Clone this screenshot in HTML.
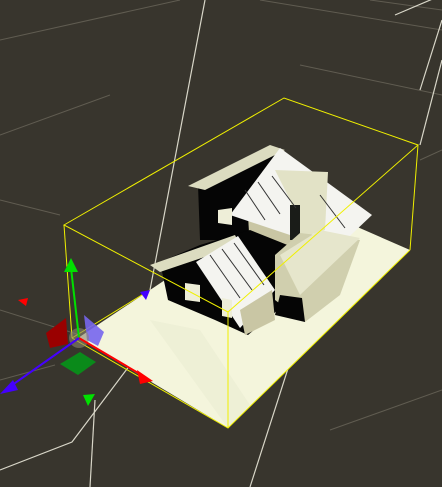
<!DOCTYPE html>
<html><head><style>html,body{margin:0;padding:0;background:#38352d;overflow:hidden}svg{display:block}</style></head>
<body>
<svg width="442" height="487" viewBox="0 0 442 487" xmlns="http://www.w3.org/2000/svg">
<rect width="442" height="487" fill="#38352d"/>
<g stroke="#6a665a" stroke-width="1" fill="none" opacity="0.8">
<line x1="0" y1="40" x2="180" y2="0"/>
<line x1="0" y1="135" x2="110" y2="95"/>
<line x1="260" y1="0" x2="442" y2="30"/>
<line x1="300" y1="65" x2="442" y2="95"/>
<line x1="0" y1="200" x2="60" y2="215"/>
<line x1="0" y1="310" x2="80" y2="335"/>
<line x1="0" y1="380" x2="55" y2="365"/>
<line x1="370" y1="0" x2="442" y2="10"/>
<line x1="420" y1="160" x2="442" y2="150"/>
<line x1="330" y1="430" x2="442" y2="390"/>
</g>
<g stroke="#d8d6c8" stroke-width="1.2" fill="none">
<polyline points="205,0 150,290 130,365 72,442 0,470"/>
<line x1="395" y1="15" x2="442" y2="-5"/>
<line x1="420" y1="90" x2="442" y2="20"/>
<line x1="420" y1="145" x2="442" y2="60"/>
<line x1="310" y1="300" x2="250" y2="487"/>
<line x1="95" y1="400" x2="90" y2="487"/>
</g>
<polygon points="78,338 228,428 410,250 330,215 165,280" fill="#f4f5dc"/>
<polygon points="150,320 228,428 250,405 200,330" fill="#eef0d6"/>
<!-- house -->
<polygon points="198,185 275,150 318,200 300,240 200,240" fill="#050505"/>
<polygon points="248,215 300,185 312,235 285,250 250,250" fill="#c9c6a4"/>
<polygon points="188,186 270,145 285,150 205,190" fill="#dcdcc0"/>
<polygon points="230,215 280,148 372,215 335,250" fill="#f4f4f0"/>
<polygon points="275,170 328,172 325,230 300,238 290,200" fill="#e2e2c6"/>
<polygon points="290,205 300,205 300,240 290,240" fill="#1a1c18"/>
<polygon points="160,262 200,245 250,230 300,250 290,300 248,335 215,320 168,300" fill="#050505"/>
<polygon points="150,265 235,235 240,245 160,272" fill="#dcdcc0"/>
<polygon points="196,262 238,236 275,290 240,328" fill="#f4f4f0"/>
<polygon points="240,310 272,290 275,320 245,335" fill="#c9c6a4"/>
<polygon points="275,255 300,233 360,240 340,295 305,322 275,300" fill="#d0cfae"/>
<polygon points="280,255 320,230 360,238 300,295" fill="#e6e6cc"/>
<polygon points="280,295 302,298 305,322 275,315" fill="#050505"/>
<polygon points="218,210 232,208 232,225 218,223" fill="#eeeed8"/>
<polygon points="185,283 200,285 200,302 185,300" fill="#eeeed8"/>
<polygon points="222,298 232,300 232,318 222,316" fill="#eeeed8"/>
<g stroke="#333" stroke-width="1">
<line x1="245" y1="190" x2="265" y2="220"/><line x1="258" y1="182" x2="280" y2="214"/>
<line x1="272" y1="176" x2="296" y2="208"/><line x1="320" y1="195" x2="345" y2="228"/>
<line x1="210" y1="255" x2="240" y2="298"/><line x1="222" y1="249" x2="252" y2="290"/>
<line x1="234" y1="243" x2="264" y2="285"/>
</g>
<!-- yellow box -->
<g stroke="#f0f000" stroke-width="1" fill="none">
<polygon points="64,225 284,98 418,145 228,312"/>
<polyline points="72,338 228,428 410,250"/>
<line x1="64" y1="225" x2="72" y2="338"/>
<line x1="228" y1="312" x2="228" y2="428"/>
<line x1="418" y1="145" x2="410" y2="250"/>
<line x1="72" y1="338" x2="150" y2="290"/>
</g>
<!-- gizmo -->
<polygon points="46,333 66,318 68,344 50,348" fill="#9a0000"/>
<polygon points="84,315 104,332 98,346 87,340" fill="#7766ee" opacity="0.9"/>
<polygon points="60,364 80,352 96,362 78,375" fill="#0a8a1a"/>
<circle cx="79" cy="338" r="10" fill="#8a8570" opacity="0.6"/>
<line x1="79" y1="338" x2="71" y2="268" stroke="#00e000" stroke-width="2"/>
<polygon points="71,258 64,272 78,272" fill="#00e000"/>
<line x1="79" y1="338" x2="145" y2="377" stroke="#ff0000" stroke-width="2"/>
<polygon points="153,381 137,370 140,384" fill="#ff0000"/>
<line x1="79" y1="338" x2="8" y2="388" stroke="#4400ff" stroke-width="2"/>
<polygon points="0,394 13,380 18,390" fill="#4400ff"/>
<polygon points="18,300 28,298 26,306" fill="#ff0000"/>
<polygon points="140,292 150,290 146,300" fill="#4400ff"/>
<polygon points="83,395 95,394 88,406" fill="#00e000"/>
</svg>
</body></html>
